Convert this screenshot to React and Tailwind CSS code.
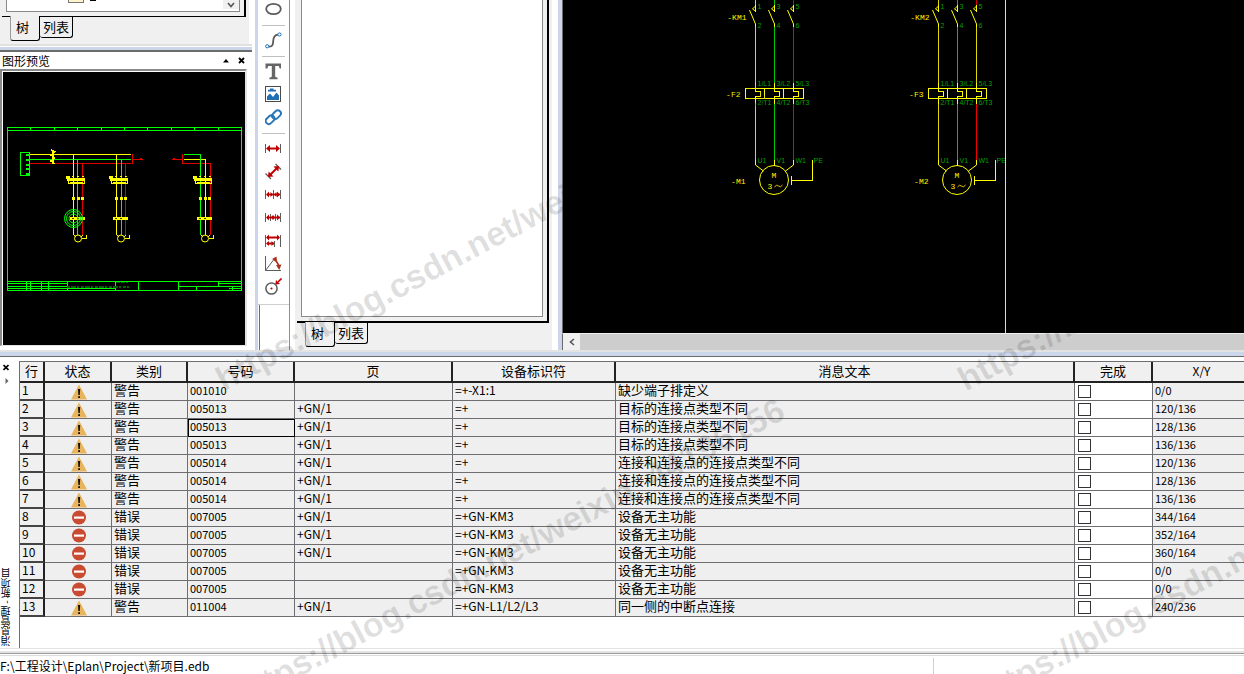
import { Fragment } from "react";

const WARN = "警告";
const ERR = "错误";

const messages = [
  { kind: WARN, code: "001010", page: "", device: "=+-X1:1", text: "缺少端子排定义", xy: "0/0" },
  { kind: WARN, code: "005013", page: "+GN/1", device: "=+", text: "目标的连接点类型不同", xy: "120/136" },
  { kind: WARN, code: "005013", page: "+GN/1", device: "=+", text: "目标的连接点类型不同", xy: "128/136", selected: true },
  { kind: WARN, code: "005013", page: "+GN/1", device: "=+", text: "目标的连接点类型不同", xy: "136/136" },
  { kind: WARN, code: "005014", page: "+GN/1", device: "=+", text: "连接和连接点的连接点类型不同", xy: "120/136" },
  { kind: WARN, code: "005014", page: "+GN/1", device: "=+", text: "连接和连接点的连接点类型不同", xy: "128/136" },
  { kind: WARN, code: "005014", page: "+GN/1", device: "=+", text: "连接和连接点的连接点类型不同", xy: "136/136" },
  { kind: ERR, code: "007005", page: "+GN/1", device: "=+GN-KM3", text: "设备无主功能", xy: "344/164" },
  { kind: ERR, code: "007005", page: "+GN/1", device: "=+GN-KM3", text: "设备无主功能", xy: "352/164" },
  { kind: ERR, code: "007005", page: "+GN/1", device: "=+GN-KM3", text: "设备无主功能", xy: "360/164" },
  { kind: ERR, code: "007005", page: "", device: "=+GN-KM3", text: "设备无主功能", xy: "0/0" },
  { kind: ERR, code: "007005", page: "", device: "=+GN-KM3", text: "设备无主功能", xy: "0/0" },
  { kind: WARN, code: "011004", page: "+GN/1", device: "=+GN-L1/L2/L3", text: "同一侧的中断点连接", xy: "240/236" },
];

const columns = [
  { label: "行", width: "w-[25px]" },
  { label: "状态", width: "w-[67px]" },
  { label: "类别", width: "w-[76px]" },
  { label: "号码", width: "w-[107px]" },
  { label: "页", width: "w-[158px]" },
  { label: "设备标识符", width: "w-[163px]" },
  { label: "消息文本", width: "" },
  { label: "完成", width: "w-[78px]" },
  { label: "X/Y", width: "w-[99px] text-[12px]" },
];

/* ======================
   ICONS
====================== */
function WarnIcon() {
  return (
    <svg className="mx-auto block" width="16" height="17" viewBox="0 0 16 17">
      <path d="M8 1.5 L16 16.5 H0 Z" fill="#e8b45c" />
      <path d="M7 6h2.2l-.4 6H7.4z" fill="#111" />
      <rect x="7.2" y="13.2" width="1.8" height="1.8" fill="#111" />
    </svg>
  );
}

function ErrorIcon() {
  return (
    <svg className="mx-auto block" width="16" height="17" viewBox="0 0 16 17">
      <circle cx="8" cy="8.5" r="7" fill="#c84b32" />
      <rect x="3" y="7.5" width="10" height="2.2" fill="#fff" />
    </svg>
  );
}

const RED = "#c00000";
const GREY = "#5c5c5c";

const tools = [
  {
    name: "椭圆",
    icon: <ellipse cx="8.5" cy="8" rx="7.3" ry="5.2" fill="none" stroke={GREY} strokeWidth="1.8" />,
  },
  null,
  {
    name: "样条曲线",
    icon: (
      <>
        <path d="M3.5 14.5C8 15 8 12 8.2 9S9.5 3 13 2.7" fill="none" stroke={GREY} strokeWidth="1.8" />
        <circle cx="2.2" cy="14.3" r="1.6" fill="#fff" stroke="#1f6fb2" />
        <circle cx="14.5" cy="2.5" r="1.6" fill="#fff" stroke="#1f6fb2" />
      </>
    ),
  },
  null,
  {
    name: "文本",
    icon: <path d="M0.5 0.5H16V5.5H14.7L13.8 3H10.2V13.8L12.6 14.7V16.2H4.4V14.7L6.8 13.8V3H3.2L2.3 5.5H0.5Z" fill="#666" />,
  },
  {
    name: "图片",
    icon: (
      <>
        <rect x="0.5" y="0.5" width="15" height="15" fill="#fff" stroke="#4a4a4a" />
        <path d="M2 14V10.5L5 7.5L8 11L11.5 6.5L14 9.5V14Z" fill="#1f6fb2" />
        <path d="M3 5.5V3.8h2V2.5h3.5v1.3H11v1.7z" fill="#1f6fb2" />
      </>
    ),
  },
  {
    name: "链接",
    icon: (
      <g fill="none" stroke="#2a75b8" strokeWidth="1.9">
        <rect x="0.2" y="7.6" width="9.8" height="6.2" rx="3.1" transform="rotate(-45 5.1 10.7)" />
        <rect x="6.6" y="2.6" width="9.8" height="6.2" rx="3.1" transform="rotate(-45 11.5 5.7)" />
      </g>
    ),
  },
  null,
  {
    name: "线性尺寸标注",
    icon: (
      <>
        <path d="M0.5 4v9M15.5 4v9" stroke={GREY} />
        <path d="M3 8.5H13" stroke={RED} strokeWidth="2" />
        <path d="M1 8.5L5 5V12ZM15 8.5L11 5V12Z" fill={RED} />
      </>
    ),
  },
  {
    name: "对齐尺寸标注",
    icon: (
      <>
        <path d="M0.5 10.5L6 16M10.5 1L16 6.5" stroke={GREY} strokeWidth="1.3" />
        <path d="M4 13L13 4" stroke={RED} strokeWidth="2" />
        <path d="M3 14L3.6 8.5L8.5 13.4ZM14 3L8.5 3.6L13.4 8.5Z" fill={RED} />
      </>
    ),
  },
  {
    name: "连续尺寸标注",
    icon: (
      <>
        <path d="M0.5 4v9M8.5 4v9M15.5 4v9" stroke={GREY} />
        <path d="M2 8.5H15" stroke={RED} strokeWidth="1.8" />
        <path d="M1 8.5L4 5.5V11.5ZM15 8.5L12 5.5V11.5ZM8 8.5L5.5 6V11ZM9 8.5L11.5 6V11Z" fill={RED} />
      </>
    ),
  },
  {
    name: "增量尺寸标注",
    icon: (
      <>
        <path d="M0.5 4v9M5.5 5v7M10.5 5v7M15.5 4v9" stroke={GREY} />
        <path d="M2 8.5H15" stroke={RED} strokeWidth="1.8" />
        <path d="M1 8.5L4 5.5V11.5ZM15 8.5L12 5.5V11.5ZM8 6L10 8.5L8 11L6 8.5Z" fill={RED} />
      </>
    ),
  },
  {
    name: "基线尺寸标注",
    icon: (
      <>
        <path d="M0.5 3v12M15.5 3v12M9.5 9v6" stroke={GREY} />
        <path d="M2 5.5H14M2 11.5H9" stroke={RED} strokeWidth="2" />
        <path d="M1 5.5L4 2.5V8.5ZM15 5.5L12 2.5V8.5ZM1 11.5L4 9V14ZM9 11.5L6.5 9V14Z" fill={RED} />
      </>
    ),
  },
  {
    name: "角度尺寸标注",
    icon: (
      <>
        <path d="M0.5 1V15.5H16M0.5 15.5L10 3" fill="none" stroke={GREY} />
        <path d="M9 4.5Q13 7 14 12" fill="none" stroke="#a8321e" strokeWidth="1.5" />
        <path d="M7 4L11.5 1.5L12 6.5ZM14.2 15L11 10L16.5 9.5Z" fill="#a8321e" />
      </>
    ),
  },
  {
    name: "半径尺寸标注",
    icon: (
      <>
        <circle cx="6.5" cy="10.5" r="5.6" fill="none" stroke={GREY} strokeWidth="1.5" />
        <circle cx="6.5" cy="10.5" r="1.1" fill={RED} />
        <path d="M16.5 0.5L13 4" stroke={RED} strokeWidth="1.6" />
        <path d="M10.3 6.5L11 2L15 6Z" fill={RED} />
      </>
    ),
  },
];

function Toolbar() {
  return (
    <div className="flex w-[35px] shrink-0 flex-col border-r border-[#8f8f8f] bg-white">
      <div className="flex flex-1 flex-col border-l-[3px] border-[#ccd6ea]">
        <div className="-mt-[2px] border-b border-[#cfcfcf] pb-1.5">
          {tools.map((tool, i) =>
            tool ? (
              <button key={i} aria-label={tool.name} className="flex h-[23px] w-full items-center justify-center">
                <svg width="17" height="17" viewBox="0 0 17 17">
                  {tool.icon}
                </svg>
              </button>
            ) : (
              <div key={i} className="flex h-2 items-center px-1">
                <div className="h-px w-full bg-[#c0c0c0]" />
              </div>
            )
          )}
        </div>
        <div className="ml-px flex-1 border-l border-[#6b6b6b]" />
      </div>
    </div>
  );
}

/* Tab pair under the tree boxes */
function TreeTabs() {
  return (
    <div className="-mt-px flex items-start pl-2 text-[13px] leading-[18px]">
      <button className="flex h-[25px] w-[30px] rounded-b-[3px] border-b border-l border-r border-b-black border-l-[#9a9a9a] border-r-black bg-[#f0f0f0] pt-0.5 pl-[5px]">
        树
      </button>
      <button className="mt-px h-[21px] w-[33px] rounded-b-[3px] border-r border-b border-black">列表</button>
    </div>
  );
}

/* ======================
   PREVIEW DRAWING
====================== */
const previewFeeders = [
  { x: 78, wires: [[73.5, 154, "#ffff00"], [77.5, 159, "#00ff00"], [82.5, 163, "#e00000"]] },
  { x: 121, wires: [[116.5, 154, "#ffff00"], [121.5, 159, "#00ff00"], [125.5, 163, "#e00000"]] },
  { x: 205, wires: [[200.5, 154, "#00ff00"], [205.5, 159, "#ffff00"], [210.5, 163, "#e00000"]] },
];

function Preview() {
  return (
    <svg className="block h-full w-full" viewBox="3 72 242 273" preserveAspectRatio="xMidYMid meet" fill="none" shapeRendering="crispEdges">
      <g stroke="#00ff00">
        <rect x="7.5" y="127.5" width="234" height="163" />
        <path d="M7 130.5H242M30.5 128v3M54.5 128v3M77.5 128v3M101.5 128v3M124.5 128v3M147.5 128v3M171.5 128v3M194.5 128v3M218.5 128v3" />
        <path d="M7 281.5H242M7 283.5H67M7 286.5H67M7 288.5H115M26.5 281v9M30.5 281v9M41.5 281v9M48.5 281v9M67.5 281v9M115.5 281v9M138.5 281v9M178.5 281v9M178 286.5H242M218.5 281v5M218 283.5H242M196.5 286v4M232.5 286v4M229 288.5H242" />
        <rect x="20.5" y="152.5" width="9" height="23" />
        <path d="M26 154.5h4M26 159.5h3M26 164.5h3M26 168.5h3M26 173.5h3" strokeWidth="2" />
      </g>
      <path d="M67 286.5H129" stroke="#006400" strokeWidth="2" strokeDasharray="3 1 5 1 2 2" />
      <path d="M116 282.5H128" stroke="#006400" strokeDasharray="4 1" />

      <path d="M30 154.5H131" stroke="#ffff00" />
      <path d="M30 159.5H131" stroke="#00ff00" />
      <path d="M30 163.5H131M132.5 154V164M132 159.5H143M140 158.5h2" stroke="#e00000" />
      <path d="M182.5 154V164M172 159.5H182M182 163.5H211M173 158.5h2" stroke="#e00000" />
      <path d="M184 154.5H201" stroke="#00ff00" />
      <path d="M184 159.5H206" stroke="#ffff00" />
      <path d="M51 150l4 2l-4 3l4 3l-4 3l4 3M53 150v14" stroke="#ffff00" strokeWidth="1.4" />

      {previewFeeders.map((f) => (
        <Fragment key={f.x}>
          {f.wires.map(([x, y, color]) => (
            <path key={x} d={`M${x} ${y}V235`} stroke={color} />
          ))}
          <g stroke="#ffff00">
            <path d={`M${f.x - 12} 177.5h4M${f.x - 11} 179.5h18`} strokeWidth="3" />
            <rect x={f.x - 9.5} y="179.5" width="16" height="4" />
            <path d={`M${f.x - 8} 182.5h13M${f.x - 6} 176.5h2M${f.x - 1} 176.5h2M${f.x + 4} 176.5h2`} />
            <path d={`M${f.x - 6} 198.5h3M${f.x - 1} 198.5h3M${f.x + 3} 198.5h3`} strokeWidth="3" />
            <path d={`M${f.x - 8} 218.5h15`} strokeWidth="3" />
            <circle cx={f.x} cy="238.5" r="3.5" shapeRendering="auto" />
            <path d={`M${f.x + 4} 238.5h4.5v-4M${f.x - 4} 235l2 2M${f.x + 5} 235l-2 2`} />
          </g>
          <path d={`M${f.x - 6} 218.5h10`} stroke="#404000" strokeDasharray="2 3" />
        </Fragment>
      ))}

      <g stroke="#00ff00" shapeRendering="auto">
        <circle cx="73.5" cy="218.5" r="9" />
        <circle cx="73.5" cy="218.5" r="7" />
        <circle cx="73.5" cy="218.5" r="4.5" />
      </g>
    </svg>
  );
}

/* ======================
   SCHEMATIC
====================== */
const feeders = [
  { cx: 774.5, contactor: "-KM1", relay: "-F2", motor: "-M1", lastWire: "#c8101c", lowWire: "#c8101c" },
  { cx: 957.5, contactor: "-KM2", relay: "-F3", motor: "-M2", lastWire: "#e0d800", lowWire: "#f00000" },
];

function Feeder({ cx, contactor, relay, motor, lastWire, lowWire }) {
  const phases = [
    { x: cx - 19, top: "#e0d800", mid: "#e0d800", low: "#e0d800", n: 1, u: "U1" },
    { x: cx, top: "#00c800", mid: "#00c800", low: "#00c800", n: 3, u: "V1" },
    { x: cx + 19, top: "#d00000", mid: lastWire, low: lowWire, n: 5, u: "W1" },
  ];
  return (
    <g>
      {phases.map((p, i) => (
        <g key={p.n}>
          <path d={`M${p.x} 0V6`} stroke={p.top} />
          <path d={`M${p.x} 26V84`} stroke={p.mid} />
          <path d={`M${p.x} 103V160`} stroke={p.low} />
          <g stroke="#ffff00">
            <path d={`M${p.x} 5V12M${p.x} 6l-3 3l3 2M${p.x - 6} 10l6 14v3`} shapeRendering="auto" />
            <path d={`M${p.x} 83v8h5v5h-5v8`} />
            <path d={i === 1 ? `M${p.x} 160v6` : i === 0 ? `M${p.x} 160v5l8 6` : `M${p.x} 160v5l-8 6`} shapeRendering="auto" />
          </g>
          <g fill="#00a000" stroke="none" className="text-[7px]">
            <text x={p.x + 2} y="9">{p.n}</text>
            <text x={p.x + 2} y="28">{p.n + 1}</text>
            <text x={p.x + 2} y="86">{`${p.n}/L${i + 1}`}</text>
            <text x={p.x + 2} y="105">{`${p.n + 1}/T${i + 1}`}</text>
            <text x={p.x + 2} y="163">{p.u}</text>
          </g>
        </g>
      ))}
      <g stroke="#ffff00">
        <path d={`M${cx - 29} 88.5h58v10h-58zM${cx - 10} 88v10M${cx + 9} 88v10`} />
        <circle cx={cx - 0.5} cy="180" r="14.5" shapeRendering="auto" />
        <path d={`M${cx + 17} 176v9M${cx + 17} 180.5h21V160`} />
        <path d={`M${cx} 187q2 -3 4 -1t4 -1`} stroke="#e8c000" shapeRendering="auto" />
      </g>
      <text x={cx + 39} y="163" fill="#00a000" className="text-[7px]">PE</text>
      <g fill="#ffee00" className="font-['Liberation_Mono',monospace] text-[8px]">
        <text x={cx - 3} y="178">M</text>
        <text x={cx - 7} y="189">3</text>
        <text x={cx - 28} y="20" textAnchor="end">{contactor}</text>
        <text x={cx - 34} y="97" textAnchor="end">{relay}</text>
        <text x={cx - 29} y="184" textAnchor="end">{motor}</text>
      </g>
    </g>
  );
}

function Schematic() {
  return (
    <svg
      className="block font-['Liberation_Sans',sans-serif]"
      width="681"
      height="333"
      viewBox="563 0 681 333"
      fill="none"
      shapeRendering="crispEdges"
    >
      {feeders.map((f) => (
        <Feeder key={f.cx} {...f} />
      ))}
      <path d="M1005.5 0V333" stroke="#d8dce8" />
    </svg>
  );
}

/* ======================
   MESSAGE TABLE
====================== */
function MessageTable() {
  const cell = "h-[18px] border-r border-b border-[#6e6e72] bg-[#efefef] p-0 pl-0.5 align-top";

  return (
    <div className="-mr-2">
      <table className="w-full table-fixed border-separate border-spacing-0 text-[13px] leading-[14px]">
        <thead>
          <tr>
            {columns.map((c) => (
              <th
                key={c.label}
                className={`h-[21px] border-r-2 border-b-2 border-r-[#222] border-b-[#222] bg-[#f0f0f0] p-0 align-top leading-[17px] font-normal ${c.width}`}
              >
                {c.label}
              </th>
            ))}
          </tr>
        </thead>
        <tbody>
          {messages.map((m, i) => (
            <tr key={i}>
              <th className="h-[18px] border-r-2 border-b-2 border-r-[#222] border-b-[#444] bg-[#f0f0f0] p-0 pl-0.5 text-left align-top text-[12px] font-normal">
                {i + 1}
              </th>
              <td className={cell}>{m.kind === WARN ? <WarnIcon /> : <ErrorIcon />}</td>
              <td className={cell}>{m.kind}</td>
              <td className={`${cell} text-[11px] ${m.selected ? "outline -outline-offset-1 outline-black" : ""}`}>{m.code}</td>
              <td className={`${cell} text-[12px]`}>{m.page}</td>
              <td className={`${cell} text-[12px]`}>{m.device}</td>
              <td className={cell}>{m.text}</td>
              <td className="h-[18px] border-r border-b border-[#6e6e72] bg-white p-0 pl-[3px]">
                <input
                  type="checkbox"
                  aria-label={`完成 ${i + 1}`}
                  className="block size-[13px] appearance-none border border-[#333] bg-white"
                />
              </td>
              <td className={`${cell} text-[11px]`}>{m.xy}</td>
            </tr>
          ))}
        </tbody>
      </table>
    </div>
  );
}

function Watermarks() {
  const spots = ["left-[226px] top-[362px]", "left-[968px] top-[362px]", "left-[244px] top-[678px]", "left-[986px] top-[678px]"];
  return (
    <div aria-hidden="true" className="pointer-events-none absolute inset-0 overflow-hidden">
      {spots.map((spot) => (
        <span
          key={spot}
          className={`absolute origin-bottom-left -rotate-[28deg] whitespace-nowrap font-['Liberation_Sans',sans-serif] text-[34px] leading-[34px] font-bold text-black/12 ${spot}`}
        >
          https://blog.csdn.net/weixin_44196156
        </span>
      ))}
    </div>
  );
}

function App() {
  return (
    <div className="relative flex h-screen flex-col overflow-hidden bg-white font-['Noto_Sans_CJK_SC',sans-serif] text-black">
      <div className="flex min-h-0 flex-1">

        {/* Left: page tree + preview */}
        <div className="flex w-[255px] shrink-0 flex-col">
          <div className="h-[44px] w-[249px] bg-[#f0f0f0] pl-0.5">
            <div className="h-[17px] w-[244px] border-r-2 border-b border-black pr-1 pb-1 pl-1">
              <div className="flex h-full items-start justify-between border-r border-b border-l border-[#8a8a8a] bg-white">
                <div className="flex gap-1.5 pl-[61px]">
                  <div className="h-[3px] w-4 border-r border-b border-l border-[#777] bg-[#fff4cc]" />
                  <div className="h-px w-1.5 bg-black" />
                </div>
                <button aria-label="向下" className="flex h-[9px] w-4 items-center justify-center bg-[#f0f0f0]">
                  <svg width="8" height="6" viewBox="0 0 8 6">
                    <path d="M1 1L4 4.5L7 1" fill="none" stroke="#555" strokeWidth="1.6" />
                  </svg>
                </button>
              </div>
            </div>
            <TreeTabs />
          </div>

          <div className="mr-[3px]">
            <div className="h-0.5 bg-[#e0e0e0]" />
            <div className="mt-px h-[3px] bg-[#ccd6ea]" />
            <div className="h-0.5 bg-[#6b6b6b]" />
          </div>

          <div className="flex h-[17px] items-center pl-0.5 pr-2.5">
            <h2 className="flex-1 text-[12px] leading-[17px]">图形预览</h2>
            <button aria-label="折叠" className="mr-[9px]">
              <svg width="6" height="4" viewBox="0 0 6 4">
                <path d="M3 0L6 3.5H0Z" />
              </svg>
            </button>
            <button aria-label="关闭预览">
              <svg width="7" height="7" viewBox="0 0 7 7">
                <path d="M1 1L6 6M6 1L1 6" stroke="#000" strokeWidth="1.8" />
              </svg>
            </button>
          </div>

          <div className="mr-2 mb-1 min-h-0 flex-1 border-t-2 border-r-2 border-b border-l-2 border-t-[#8a8a8a] border-r-[#e3e3e3] border-b-[#e3e3e3] border-l-[#8a8a8a] pt-px pl-px">
            <div className="h-full bg-black">
              <Preview />
            </div>
          </div>
        </div>

        <Toolbar />

        {/* Middle: device tree */}
        <div className="flex w-[268px] shrink-0 pl-[5px] pr-1.5">
          <div className="flex flex-1 flex-col bg-[#f0f0f0] pr-[3px] pl-0.5">
            <div className="flex min-h-0 flex-1 border-r-2 border-b-2 border-black pr-1 pb-1 pl-1">
              <div className="flex-1 border-r border-b border-l border-[#8a8a8a] bg-white" />
            </div>
            <div className="h-[27px]">
              <TreeTabs />
            </div>
          </div>
        </div>

        {/* Right: schematic editor */}
        <div className="flex min-w-0 flex-1 flex-col border-l-4 border-[#ccd6ea]">
          <div className="min-h-0 flex-1 overflow-hidden border-l border-[#6b6b6b] bg-black">
            <Schematic />
          </div>
          <div className="flex h-[17px] border-t border-l border-t-[#f0f0f0] border-l-[#6b6b6b] bg-[#cdcdcd]">
            <button aria-label="向左滚动" className="flex w-[17px] items-center justify-center bg-[#f0f0f0]">
              <svg width="6" height="8" viewBox="0 0 6 8">
                <path d="M5 1L1.5 4L5 7" fill="none" stroke="#555" strokeWidth="1.6" />
              </svg>
            </button>
          </div>
        </div>
      </div>

      <div className="h-0.5 bg-[#e3e3e3]" />
      <div className="h-1 bg-[#ccd6ea]" />
      <div className="h-px bg-[#6b6b6b]" />

      {/* Message management */}
      <div className="flex pt-1">
        <div className="flex w-[19px] shrink-0 flex-col items-start">
          <button aria-label="关闭" className="mt-[3px] ml-[3px]">
            <svg width="6" height="7" viewBox="0 0 6 7">
              <path d="M0.5 1L5.5 6M5.5 1L0.5 6" stroke="#000" strokeWidth="1.7" />
            </svg>
          </button>
          <button aria-label="展开" className="mt-[7px] ml-[5px]">
            <svg width="4" height="6" viewBox="0 0 4 6">
              <path d="M0.5 0L3.5 3L0.5 6Z" fill="#666" />
            </svg>
          </button>
          <span className="mt-auto mb-0.5 rotate-180 text-[10px] leading-[12px] [writing-mode:vertical-rl]">消息管理 - 新项目</span>
        </div>
        <div className="min-w-0 flex-1 overflow-hidden border-t border-l border-[#6e6e72] pb-[31px]">
          <MessageTable />
        </div>
      </div>

      <div className="h-px bg-[#e3e3e3]" />
      <div className="mt-0.5 h-0.5 bg-[#e3e3e3]" />
      <div className="h-px bg-[#9a9a9a]" />
      <div className="mt-px h-px bg-[#dcdcdc]" />

      {/* Status bar */}
      <div className="flex h-[18px] items-stretch justify-between pt-0.5 text-[12px] leading-[16px]">
        <span>F:\工程设计\Eplan\Project\新项目.edb</span>
        <span className="w-[311px] border-l border-[#d0d0d0]" />
      </div>

      <Watermarks />
    </div>
  );
}

export default App;
